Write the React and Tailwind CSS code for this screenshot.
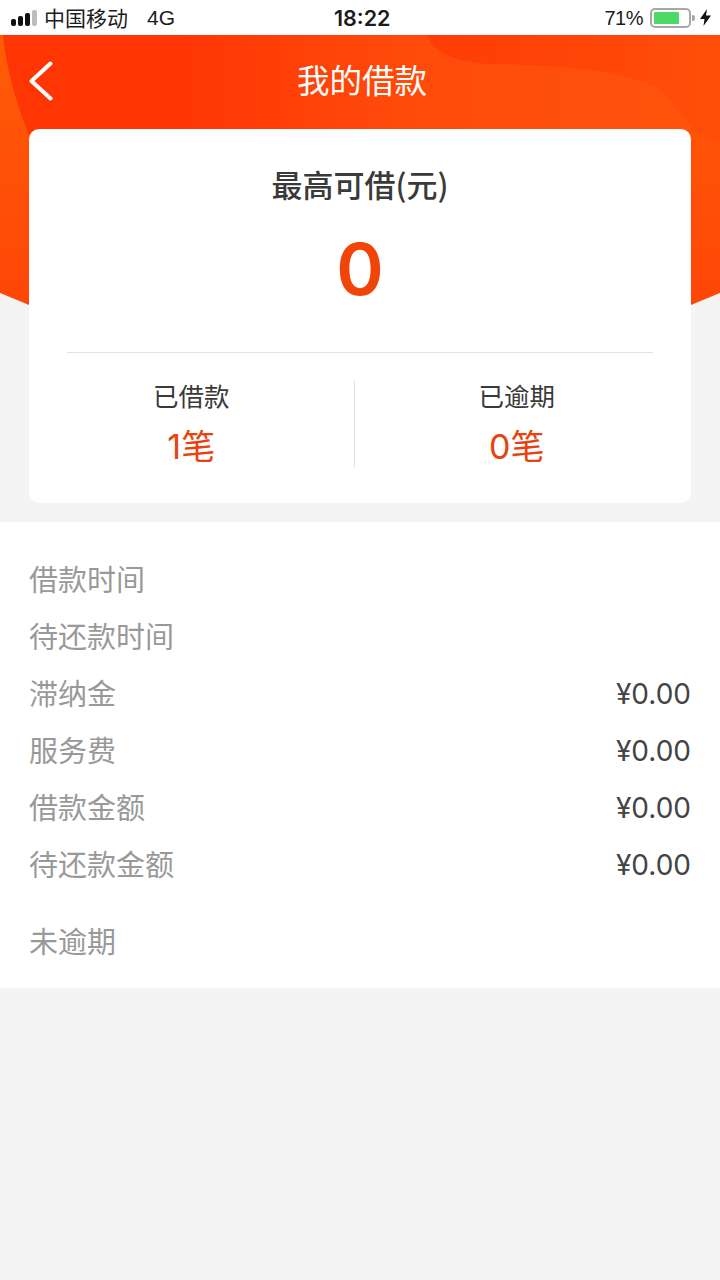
const FONT = { fontFamily: '"Noto Sans CJK SC", sans-serif' };
const LATIN = { fontFamily: '"Liberation Sans", sans-serif' };
const NUM = { fontFamily: 'Inter, "Noto Sans CJK SC", sans-serif' };

const HeaderBg = () => (
  <svg className="absolute left-0 top-[35px] z-0" width="720" height="275" viewBox="0 0 720 275">
    <defs>
      <linearGradient id="base" x1="0" y1="0" x2="0" y2="1">
        <stop offset="0" stopColor="#ff5c06" />
        <stop offset="1" stopColor="#ff4608" />
      </linearGradient>
      <linearGradient id="mid" gradientUnits="userSpaceOnUse" x1="0" y1="0" x2="720" y2="0">
        <stop offset="0.25" stopColor="#ff3604" />
        <stop offset="0.55" stopColor="#ff4a0a" />
        <stop offset="1" stopColor="#ff540e" />
      </linearGradient>
      <linearGradient id="blob" gradientUnits="userSpaceOnUse" x1="428" y1="0" x2="720" y2="0">
        <stop offset="0" stopColor="#ff3c04" />
        <stop offset="1" stopColor="#ff4e0a" />
      </linearGradient>
    </defs>
    <path d="M0 0H720V258Q705 264 691 270H29Q15 264 0 258Z" fill="url(#base)" />
    <path d="M3 0C6 33 16 68 29 100V110H691V0Z" fill="url(#mid)" />
    <path d="M427 0C433 16 455 28 490 29C560 30 625 36 657 53C676 65 684 88 700 100C707 105 713 107 720 108V0Z" fill="url(#blob)" />
  </svg>
);

const StatusBar = () => (
  <div className="relative z-10 h-[35px] bg-white flex items-center justify-between text-[#1c1c1c] pl-[11px] pr-[9px]">
    <div className="flex items-center">
      <div className="flex items-end gap-[2px] h-[16px]">
        <span className="w-[5px] h-[7px] rounded-[2px] bg-[#111]" />
        <span className="w-[5px] h-[10px] rounded-[2px] bg-[#111]" />
        <span className="w-[5px] h-[13px] rounded-[2px] bg-[#111]" />
        <span className="w-[5px] h-[16px] rounded-[2px] bg-[#bdbdbd]" />
      </div>
      <span className="ml-[7px] text-[21px] leading-none">中国移动</span>
      <span className="ml-[19px] text-[21px] leading-none" style={LATIN}>4G</span>
    </div>
    <span className="absolute left-[334px] top-[6px] text-[21.5px] leading-[24px] font-semibold" style={NUM}>18:22</span>
    <div className="flex items-center">
      <span className="text-[20px] leading-none tracking-[-0.5px]" style={LATIN}>71%</span>
      <div className="ml-[7px] w-[41px] h-[20px] rounded-[5px] border-2 border-[#a8a8a8] p-[2px] flex">
        <div className="w-[25px] bg-[#4cd964] rounded-[1px]" />
      </div>
      <span className="ml-[1px] w-[3px] h-[6px] bg-[#a8a8a8] rounded-r-[2px]" />
      <svg className="ml-[5px]" width="11" height="17" viewBox="0 0 11 17">
        <path d="M7 0L0 10H4.5L3.5 17L11 6.5H6Z" fill="#111" />
      </svg>
    </div>
  </div>
);

const Row = ({ label, value, className = "" }) => (
  <div className={`flex items-center justify-between h-[57px] ${className}`}>
    <span className="text-[#999999]">{label}</span>
    {value && <span className="pt-[2px] text-[#444444] text-[28px]" style={NUM}>{value}</span>}
  </div>
);

const Stat = ({ label, value }) => (
  <div className="flex-1 flex flex-col items-center">
    <span className="text-[25.5px] leading-[28px] text-[#3a3a3a]">{label}</span>
    <span className="text-[34px] leading-[46px] mt-[15px] text-[#e8430f]" style={NUM}>{value}</span>
  </div>
);

export default function App() {
  return (
    <div className="relative w-[720px] h-[1280px] overflow-hidden bg-[#f4f4f4]" style={FONT}>
      <StatusBar />
      <HeaderBg />

      <div className="relative z-10 h-[94px] pb-[6px] flex items-center justify-center">
        <svg className="absolute left-[28px] top-[26px]" width="26" height="40" viewBox="0 0 26 40">
          <path d="M22.5 2.5L3.5 20L22.5 37.5" fill="none" stroke="#fff" strokeWidth="4" strokeLinecap="round" strokeLinejoin="round" />
        </svg>
        <span className="ml-[4px] text-white text-[32.5px] leading-none">我的借款</span>
      </div>

      <div className="relative z-10 mx-[29px] h-[374px] bg-white rounded-[10px] flex flex-col items-center">
        <div className="mt-[32px] text-[#3a3a3a] text-[31px] leading-[46px] font-medium">最高可借(元)</div>
        <div className="mt-[12px] text-[#f04408] text-[72px] leading-[100px] font-semibold" style={NUM}>0</div>
        <div className="mt-[33px] w-[586px] border-t border-[#e2e2e2]" />
        <div className="mt-[28px] w-[650px] self-start flex items-start">
          <Stat label="已借款" value="1笔" />
          <div className="w-px h-[86px] bg-[#e2e2e2]" />
          <Stat label="已逾期" value="0笔" />
        </div>
      </div>

      <div className="relative z-10 mt-[19px] h-[466px] bg-white px-[29px] pt-[28px] text-[29px]">
        <Row label="借款时间" />
        <Row label="待还款时间" />
        <Row label="滞纳金" value="¥0.00" />
        <Row label="服务费" value="¥0.00" />
        <Row label="借款金额" value="¥0.00" />
        <Row label="待还款金额" value="¥0.00" />
        <Row label="未逾期" className="mt-[20px]" />
      </div>
    </div>
  );
}
